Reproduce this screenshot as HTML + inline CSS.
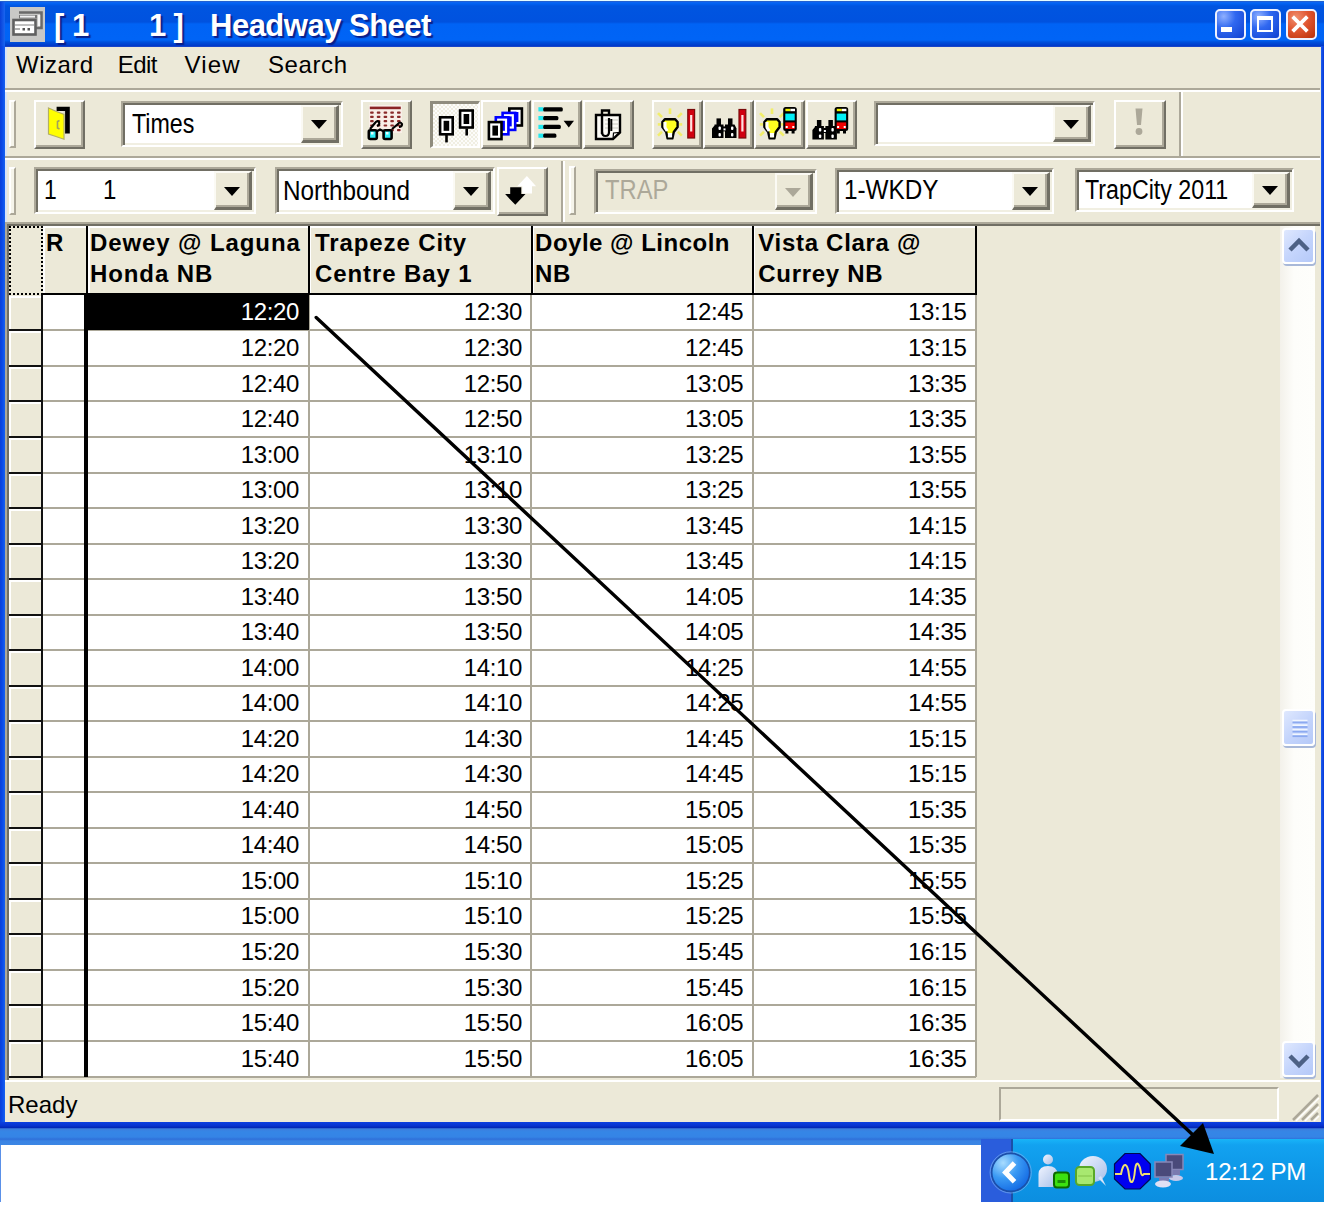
<!DOCTYPE html><html><head><meta charset="utf-8"><style>
*{box-sizing:border-box}
html,body{margin:0;padding:0}
body{width:1324px;height:1209px;overflow:hidden;position:relative;background:#fff;font-family:"Liberation Sans",sans-serif;color:#000}
.a{position:absolute}
.t{position:absolute;white-space:nowrap;font-size:24px;line-height:27px}
.b{font-weight:bold}
.btn{position:absolute;background:#ece9d8;border-top:2px solid #fff;border-left:2px solid #fff;border-right:2px solid #716f64;border-bottom:2px solid #716f64;box-shadow:inset -2px -2px 0 #aca899}
.combo{position:absolute;background:#fff;border-top:2px solid #aca899;border-left:2px solid #aca899;border-right:2px solid #fff;border-bottom:2px solid #fff;box-shadow:inset 2px 2px 0 #716f64, inset -2px -2px 0 #f1efe2}
.dd{position:absolute;top:2px;bottom:2px;right:2px;width:38px;background:#ece9d8;border-top:2px solid #fbfaf4;border-left:2px solid #fbfaf4;border-right:3px solid #716f64;border-bottom:3px solid #716f64;box-shadow:inset -2px -2px 0 #aca899}
.arr{position:absolute;left:50%;top:50%;margin-left:-8.5px;margin-top:-3.5px;width:0;height:0;border-left:8.5px solid transparent;border-right:8.5px solid transparent;border-top:9px solid #000}
.grip{position:absolute;width:7px;border-left:2px solid #fff;border-top:2px solid #fff;border-right:2px solid #aca899;border-bottom:2px solid #aca899;background:#f5f4ea}
.hl{position:absolute;height:2px;background:#aca899}
.wl{position:absolute;height:2px;background:#fff}
.cell{position:absolute;text-align:right;font-size:24px;line-height:27px;white-space:nowrap}
</style></head><body>
<div class="a" style="left:0;top:0;width:1324px;height:47px;background:linear-gradient(to bottom,#e4fcff 0px,#e4fcff 1px,#2a62c8 1px,#1a5ed8 2px,#0a66f2 2.5px,#0060f0 4px,#0055e0 6px,#0052df 22px,#0063f5 24px,#0064f6 40px,#0050dc 42px,#0038c8 46px,#3050c8 47px)"></div>
<div class="a" style="left:0;top:2px;width:5px;height:45px;background:linear-gradient(to right,#0840d8,#1a66f0)"></div>
<div class="a" style="left:10px;top:7px;width:35px;height:35px;background:#c8c8c6"></div>
<svg class="a" style="left:0;top:0" width="50" height="50" viewBox="0 0 50 50"><path d="M19 12.5 L41.5 12.5 L41.5 28 L36 28" fill="none" stroke="#6a6a6a" stroke-width="2.6"/><rect x="38" y="15" width="2.2" height="11" fill="#f4f4f4"/><rect x="19" y="15" width="18" height="3.5" fill="#777"/><rect x="20" y="15.6" width="15" height="2" fill="#f0f0f0"/><rect x="13.5" y="20" width="22" height="14.5" fill="#fff" stroke="#606060" stroke-width="2.6"/><rect x="15" y="24" width="19" height="2" fill="#c0c0c0"/><rect x="15" y="28" width="5" height="2" fill="#b0b0b0"/><rect x="22.5" y="28" width="2.5" height="2.5" fill="#555"/><rect x="27.5" y="28" width="2.5" height="2.5" fill="#555"/></svg>
<div class="t" style="left:54px;top:8px;color:#fff;font-weight:bold;font-size:31px;line-height:35px;text-shadow:2px 2px 1px #0a1f8a">[</div>
<div class="t" style="left:72px;top:8px;color:#fff;font-weight:bold;font-size:31px;line-height:35px;text-shadow:2px 2px 1px #0a1f8a">1</div>
<div class="t" style="left:149px;top:8px;color:#fff;font-weight:bold;font-size:31px;line-height:35px;text-shadow:2px 2px 1px #0a1f8a">1</div>
<div class="t" style="left:173.5px;top:8px;color:#fff;font-weight:bold;font-size:31px;line-height:35px;text-shadow:2px 2px 1px #0a1f8a">]</div>
<div class="t" style="left:210px;top:8px;letter-spacing:-0.5px;color:#fff;font-weight:bold;font-size:31px;line-height:35px;text-shadow:2px 2px 1px #0a1f8a">Headway Sheet</div>
<div class="a" style="left:1215px;top:9px;width:31px;height:31px;border:2px solid #eef2ff;border-radius:5px;background:radial-gradient(circle at 25% 20%,#8fb0ff 0,#3068f0 40%,#1040d0 100%)"></div>
<div class="a" style="left:1250px;top:9px;width:31px;height:31px;border:2px solid #eef2ff;border-radius:5px;background:radial-gradient(circle at 25% 20%,#8fb0ff 0,#3068f0 40%,#1040d0 100%)"></div>
<div class="a" style="left:1286px;top:9px;width:31px;height:31px;border:2px solid #eef2ff;border-radius:5px;background:radial-gradient(circle at 30% 25%,#f09070 0,#e05530 45%,#b83008 100%)"></div>
<div class="a" style="left:1221px;top:27px;width:11px;height:5px;background:#fff"></div>
<div class="a" style="left:1257px;top:16px;width:16px;height:16px;border:2px solid #fff;border-top-width:4px"></div>
<svg class="a" style="left:1286px;top:9px" width="31" height="31" viewBox="0 0 31 31"><path d="M8 9 L20 21 M20 9 L8 21" stroke="#fff" stroke-width="3.8" stroke-linecap="square"/></svg>
<div class="a" style="left:0;top:47px;width:1324px;height:1075px;background:#ece9d8"></div>
<div class="a" style="left:0;top:46px;width:5px;height:1082px;background:linear-gradient(to right,#0a3fd8 0,#0a48e6 40%,#1662f2 100%)"></div>
<div class="a" style="left:5px;top:47px;width:2px;height:176px;background:#d8e4f8"></div>
<div class="a" style="left:1321px;top:46px;width:3px;height:1082px;background:linear-gradient(to right,#1a5ef0,#0838d8)"></div>
<div class="a" style="left:0;top:1122px;width:1324px;height:7px;background:linear-gradient(to bottom,#0c40e0,#0834d0 50%,#0020a8)"></div>
<div class="t" style="left:16.0px;top:51px;letter-spacing:0.50px">Wizard</div>
<div class="t" style="left:117.8px;top:51px;letter-spacing:-0.60px">Edit</div>
<div class="t" style="left:184.5px;top:51px;letter-spacing:1.20px">View</div>
<div class="t" style="left:268.0px;top:51px;letter-spacing:0.60px">Search</div>
<div class="hl" style="left:5px;top:88px;width:1315px"></div>
<div class="wl" style="left:5px;top:90px;width:1315px"></div>
<div class="grip" style="left:9px;top:100px;height:48px"></div>
<div class="btn" style="left:34px;top:100px;width:51px;height:49px"></div>
<div class="combo" style="left:121px;top:101px;width:222px;height:46px"><div class="dd"><div class="arr"></div></div></div>
<div class="btn" style="left:361px;top:100px;width:51px;height:49px"></div>
<div class="a" style="left:430px;top:101px;width:50px;height:47px;border-top:3px solid #8f8c7e;border-left:3px solid #8f8c7e;border-right:2px solid #fff;border-bottom:2px solid #fff;background-color:#f4f3ee;background-image:repeating-conic-gradient(#f0eee2 0 25%,#fcfcfa 0 50%);background-size:4px 4px"></div>
<div class="btn" style="left:481px;top:100px;width:50px;height:49px"></div>
<div class="btn" style="left:532px;top:100px;width:50px;height:49px"></div>
<div class="btn" style="left:583px;top:100px;width:51px;height:49px"></div>
<div class="btn" style="left:652px;top:100px;width:51px;height:49px"></div>
<div class="btn" style="left:703px;top:100px;width:51px;height:49px"></div>
<div class="btn" style="left:754px;top:100px;width:51px;height:49px"></div>
<div class="btn" style="left:806px;top:100px;width:51px;height:49px"></div>
<svg class="a" style="left:0;top:0" width="1324" height="230" viewBox="0 0 1324 230"><path d="M56.6 106.8 L69.8 106.8 L69.8 133.4 L65 133.4 L65 111 L56.6 111 Z" fill="#000"/><rect x="63.5" y="111" width="1.6" height="22" fill="#d8d8c8"/><path d="M48.5 108 L56.5 111.5 L64 114.5 L64 139.2 L56 136.5 L48.5 134 Z" fill="#ffff00" stroke="#b4b060" stroke-width="1.2"/><path d="M59.5 120.5 L57.5 121.5 L57.5 128 L59.5 129" stroke="#a0a060" stroke-width="1.6" fill="none"/><rect x="369" y="105" width="33" height="28" fill="#fff0f0" opacity="0.7"/><rect x="369.8" y="106.6" width="31" height="2.6" fill="#8b2424"/><g fill="#8b2a2a"><rect x="370.1" y="111.5" width="3.6" height="2.2" rx="0.8"/><rect x="370.1" y="115.8" width="3.6" height="2.2" rx="0.8"/><rect x="370.1" y="120.1" width="3.6" height="2.2" rx="0.8"/><rect x="370.1" y="124.4" width="3.6" height="2.2" rx="0.8"/><rect x="376.8" y="111.5" width="3.6" height="2.2" rx="0.8"/><rect x="376.8" y="115.8" width="3.6" height="2.2" rx="0.8"/><rect x="376.8" y="120.1" width="3.6" height="2.2" rx="0.8"/><rect x="376.8" y="124.4" width="3.6" height="2.2" rx="0.8"/><rect x="383.6" y="111.5" width="3.6" height="2.2" rx="0.8"/><rect x="383.6" y="115.8" width="3.6" height="2.2" rx="0.8"/><rect x="383.6" y="120.1" width="3.6" height="2.2" rx="0.8"/><rect x="383.6" y="124.4" width="3.6" height="2.2" rx="0.8"/><rect x="390.3" y="111.5" width="3.6" height="2.2" rx="0.8"/><rect x="390.3" y="115.8" width="3.6" height="2.2" rx="0.8"/><rect x="390.3" y="120.1" width="3.6" height="2.2" rx="0.8"/><rect x="390.3" y="124.4" width="3.6" height="2.2" rx="0.8"/><rect x="390.3" y="129.0" width="3.6" height="2.2" rx="0.8"/><rect x="397.0" y="111.5" width="3.6" height="2.2" rx="0.8"/><rect x="397.0" y="115.8" width="3.6" height="2.2" rx="0.8"/><rect x="397.0" y="120.1" width="3.6" height="2.2" rx="0.8"/><rect x="397.0" y="124.4" width="3.6" height="2.2" rx="0.8"/><rect x="397.0" y="129.0" width="3.6" height="2.2" rx="0.8"/></g><path d="M370 129 L375 123 Q377 120 379 122 Q380 125 377 126" stroke="#000" stroke-width="2.2" fill="none"/><path d="M392 129 L398 124 Q400 121 402 124 Q402 127 399 127" stroke="#000" stroke-width="2.2" fill="none"/><rect x="368.8" y="130.2" width="8" height="8.8" rx="1.5" fill="#30f0f8" stroke="#000" stroke-width="2.6"/><rect x="383.6" y="130.2" width="8" height="8.8" rx="1.5" fill="#30f0f8" stroke="#000" stroke-width="2.6"/><rect x="371" y="132" width="2.5" height="2.5" fill="#e8ffff"/><rect x="386" y="132" width="2.5" height="2.5" fill="#e8ffff"/><path d="M376.5 131.5 L380 129.5 L384 131.5" stroke="#000" stroke-width="2.4" fill="none"/><rect x="438.8" y="116.0" width="15.2" height="19.6" fill="#000"/><rect x="441.4" y="118.6" width="10.0" height="14.4" fill="#fff"/><rect x="443.6" y="120.8" width="5.6" height="10.0" fill="#000"/><rect x="445.2" y="135" width="2.6" height="7.4" fill="#000"/><rect x="458.8" y="109.2" width="15.2" height="19.6" fill="#000"/><rect x="461.4" y="111.8" width="10.0" height="14.4" fill="#fff"/><rect x="463.6" y="114.0" width="5.6" height="10.0" fill="#000"/><rect x="465.4" y="128.5" width="2.6" height="7" fill="#000"/><rect x="508.0" y="107.2" width="15.2" height="19.6" fill="#000"/><rect x="510.6" y="109.8" width="10.0" height="14.4" fill="#fff"/><rect x="512.8" y="112.0" width="5.6" height="10.0" fill="#0000ff"/><rect x="501.3" y="111.6" width="15.2" height="19.6" fill="#0000ff"/><rect x="503.9" y="114.2" width="10.0" height="14.4" fill="#fff"/><rect x="506.1" y="116.4" width="5.6" height="10.0" fill="#0000ff"/><rect x="494.5" y="116.0" width="15.2" height="19.6" fill="#0000ff"/><rect x="497.1" y="118.6" width="10.0" height="14.4" fill="#fff"/><rect x="499.3" y="120.8" width="5.6" height="10.0" fill="#0000ff"/><rect x="487.6" y="120.8" width="15.2" height="19.6" fill="#000"/><rect x="490.2" y="123.4" width="10.0" height="14.4" fill="#fff"/><rect x="492.4" y="125.6" width="5.6" height="10.0" fill="#000"/><g fill="#000"><rect x="543" y="107.2" width="19.8" height="4.2" rx="1.5"/><rect x="543" y="116" width="15.4" height="4.2" rx="1.5"/><rect x="543" y="124.8" width="17.8" height="4.2" rx="1.5"/><rect x="543" y="133.6" width="13.4" height="4.2" rx="1.5"/></g><g fill="#20e8f0"><rect x="538.4" y="107.2" width="4.8" height="4.2"/><rect x="538.4" y="116" width="4.8" height="4.2"/><rect x="538.4" y="124.8" width="4.8" height="4.2"/><rect x="538.4" y="133.6" width="4.8" height="4.2"/></g><path d="M563.6 120.8 L574 120.8 L568.8 127.4 Z" fill="#000"/><path d="M596 115 L620 115 L620 132.4 L613 139 L596 139 Z" fill="#fbfaf5" stroke="#000" stroke-width="2.4" stroke-linejoin="miter"/><path d="M613 139 L613.5 133 L620 132.4" fill="none" stroke="#000" stroke-width="1.2"/><g stroke="#c8c8c0" stroke-width="1"><line x1="605" y1="120" x2="618" y2="120"/><line x1="605" y1="124" x2="618" y2="124"/><line x1="605" y1="128" x2="618" y2="128"/></g><path d="M602 134 L602 110.5 L609 110.5 L609 114" stroke="#000" stroke-width="2.4" fill="none"/><path d="M602 132 Q602 136 605.5 136 Q609 136 609 132 L609 118" stroke="#000" stroke-width="2.2" fill="none"/><line x1="611.3" y1="119" x2="611.3" y2="131" stroke="#000" stroke-width="2"/><g stroke="#f2ee6a" stroke-width="2.6" stroke-linecap="butt"><line x1="670.0" y1="108.4" x2="670.0" y2="114.0"/><line x1="658.0" y1="113.2" x2="662.0" y2="117.2"/><line x1="681.8" y1="113.2" x2="677.8" y2="117.2"/><line x1="657.8" y1="124.4" x2="661.0" y2="124.4"/><line x1="679.0" y1="124.4" x2="682.2" y2="124.4"/><line x1="658.0" y1="135.6" x2="662.0" y2="131.8"/><line x1="681.8" y1="135.6" x2="677.8" y2="131.8"/></g><path d="M664.8 119.2 L675.2 119.2 L677.6 122.0 L677.6 127.0 L673.8 132.0 L672.4 138.4 L667.6 138.4 L666.2 132.0 L662.4 127.0 L662.4 122.0 Z" fill="#ffff20" stroke="#000" stroke-width="2.4" stroke-linejoin="round"/><path d="M665.0 122 L665.0 127.5 L667.2 131" stroke="#fff" stroke-width="3" fill="none"/><rect x="667.9" y="133" width="4.2" height="4.4" fill="#fff"/><rect x="687.8" y="109.5" width="6.8" height="28.5" fill="#d00010" stroke="#7a0a0a" stroke-width="1.2"/><rect x="690.1" y="115" width="2.2" height="16.5" fill="#ffe0e0"/><g fill="#000"><rect x="716.5" y="118.4" width="4.5" height="9"/><rect x="728.0" y="118.4" width="4.5" height="9"/><path d="M714.5 124.4 L723.5 124.4 L723.5 138.0 L712.0 138.0 L712.0 128.4 L714.5 125.4 Z"/><path d="M725.0 124.4 L734.5 124.4 L736.5 128.4 L736.5 138.0 L725.0 138.0 Z"/><rect x="723.0" y="126.4" width="3" height="5"/></g><g fill="#fff"><rect x="718.5" y="126.4" width="2.4" height="3.6" rx="1"/><rect x="718.5" y="132.9" width="2.4" height="3.6" rx="1"/><rect x="731.0" y="126.4" width="2.4" height="3.6" rx="1"/><rect x="731.0" y="132.9" width="2.4" height="3.6" rx="1"/><rect x="723.5" y="128.4" width="2" height="2"/></g><rect x="739.0" y="109.5" width="6.8" height="28.5" fill="#d00010" stroke="#7a0a0a" stroke-width="1.2"/><rect x="741.3" y="115" width="2.2" height="16.5" fill="#ffe0e0"/><g stroke="#f2ee6a" stroke-width="2.6" stroke-linecap="butt"><line x1="772.0" y1="108.4" x2="772.0" y2="114.0"/><line x1="760.0" y1="113.2" x2="764.0" y2="117.2"/><line x1="783.8" y1="113.2" x2="779.8" y2="117.2"/><line x1="759.8" y1="124.4" x2="763.0" y2="124.4"/><line x1="781.0" y1="124.4" x2="784.2" y2="124.4"/><line x1="760.0" y1="135.6" x2="764.0" y2="131.8"/><line x1="783.8" y1="135.6" x2="779.8" y2="131.8"/></g><path d="M766.8 119.2 L777.2 119.2 L779.6 122.0 L779.6 127.0 L775.8 132.0 L774.4 138.4 L769.6 138.4 L768.2 132.0 L764.4 127.0 L764.4 122.0 Z" fill="#ffff20" stroke="#000" stroke-width="2.4" stroke-linejoin="round"/><path d="M767.0 122 L767.0 127.5 L769.2 131" stroke="#fff" stroke-width="3" fill="none"/><rect x="769.9" y="133" width="4.2" height="4.4" fill="#fff"/><rect x="783.2" y="107" width="13.6" height="24" rx="2.5" fill="#000"/><rect x="785.4" y="108.8" width="5" height="2.4" fill="#f0f000"/><rect x="790.4" y="108.8" width="4.6" height="2.4" fill="#fff"/><rect x="785.3" y="113.6" width="9.4" height="6.8" fill="#00f0f8"/><rect x="785.3" y="122.4" width="9.4" height="6.6" fill="#f00000"/><rect x="785.7" y="126" width="2" height="2" fill="#fff"/><rect x="792.3" y="126" width="2" height="2" fill="#fff"/><rect x="785.4" y="130" width="3" height="3.5" fill="#000"/><rect x="791.6" y="130" width="3" height="3.5" fill="#000"/><g fill="#000"><rect x="816.9" y="120.0" width="4.5" height="9"/><rect x="828.4" y="120.0" width="4.5" height="9"/><path d="M814.9 126.0 L823.9 126.0 L823.9 139.6 L812.4 139.6 L812.4 130.0 L814.9 127.0 Z"/><path d="M825.4 126.0 L834.9 126.0 L836.9 130.0 L836.9 139.6 L825.4 139.6 Z"/><rect x="823.4" y="128.0" width="3" height="5"/></g><g fill="#fff"><rect x="818.9" y="128.0" width="2.4" height="3.6" rx="1"/><rect x="818.9" y="134.5" width="2.4" height="3.6" rx="1"/><rect x="831.4" y="128.0" width="2.4" height="3.6" rx="1"/><rect x="831.4" y="134.5" width="2.4" height="3.6" rx="1"/><rect x="823.9" y="130.0" width="2" height="2"/></g><rect x="834.6" y="107" width="13.6" height="24" rx="2.5" fill="#000"/><rect x="836.8" y="108.8" width="5" height="2.4" fill="#f0f000"/><rect x="841.8" y="108.8" width="4.6" height="2.4" fill="#fff"/><rect x="836.7" y="113.6" width="9.4" height="6.8" fill="#00f0f8"/><rect x="836.7" y="122.4" width="9.4" height="6.6" fill="#f00000"/><rect x="837.1" y="126" width="2" height="2" fill="#fff"/><rect x="843.7" y="126" width="2" height="2" fill="#fff"/><rect x="836.8" y="130" width="3" height="3.5" fill="#000"/><rect x="843.0" y="130" width="3" height="3.5" fill="#000"/></svg>
<div class="combo" style="left:874px;top:101px;width:221px;height:45px"><div class="dd"><div class="arr"></div></div></div>
<div class="btn" style="left:1114px;top:100px;width:52px;height:49px"></div>
<svg class="a" style="left:1114px;top:100px" width="52" height="49" viewBox="0 0 52 49"><path d="M21.5 8.5 L28.5 8.5 L27 25 L23 25 Z" fill="#aca899"/><circle cx="25" cy="31.5" r="3.4" fill="#aca899"/></svg>
<div class="a" style="left:1179px;top:92px;width:2px;height:65px;background:#aca899"></div>
<div class="a" style="left:1181px;top:92px;width:2px;height:65px;background:#fff"></div>
<div class="hl" style="left:5px;top:156px;width:1315px"></div>
<div class="wl" style="left:5px;top:158px;width:1315px"></div>
<div class="grip" style="left:9px;top:167px;height:48px"></div>
<div class="combo" style="left:34px;top:167px;width:222px;height:47px"><div class="dd"><div class="arr"></div></div></div>
<div class="combo" style="left:275px;top:167px;width:220px;height:47px"><div class="dd"><div class="arr"></div></div></div>
<div class="btn" style="left:497px;top:167px;width:51px;height:49px"></div>
<svg class="a" style="left:0;top:0" width="1324" height="230" viewBox="0 0 1324 230"><path d="M526.9 176 L536.1 186.2 L532 186.2 L532 193.6 L522.3 193.6 L522.3 186.2 L517.2 186.2 Z" fill="#fff"/><path d="M510.2 187.2 L521.3 187.2 L521.3 194.1 L525.5 194.1 L515.3 204.8 L505.1 194.1 L510.2 194.1 Z" fill="#000"/></svg>
<div class="a" style="left:561px;top:161px;width:2px;height:61px;background:#aca899"></div>
<div class="a" style="left:563px;top:161px;width:2px;height:61px;background:#fff"></div>
<div class="grip" style="left:569px;top:166px;height:49px"></div>
<div class="combo" style="left:594px;top:169px;width:223px;height:45px;background:#ece9d8"><div class="dd"><div class="arr" style="border-top-color:#aca899"></div></div></div>
<div class="combo" style="left:835px;top:168px;width:219px;height:46px"><div class="dd"><div class="arr"></div></div></div>
<div class="combo" style="left:1075px;top:168px;width:219px;height:44px"><div class="dd"><div class="arr"></div></div></div>
<div class="a" style="left:131.50px;top:109.91px;font-size:28.0px;line-height:28.0px;white-space:nowrap;transform:scaleX(0.8300);transform-origin:0 0;">Times</div>
<div class="a" style="left:43.50px;top:177.33px;font-size:27.0px;line-height:27.0px;white-space:nowrap;transform:scaleX(0.8500);transform-origin:0 0;">1</div>
<div class="a" style="left:103.00px;top:177.33px;font-size:27.0px;line-height:27.0px;white-space:nowrap;transform:scaleX(0.8900);transform-origin:0 0;">1</div>
<div class="a" style="left:283.00px;top:177.63px;font-size:27.0px;line-height:27.0px;white-space:nowrap;transform:scaleX(0.9000);transform-origin:0 0;">Northbound</div>
<div class="a" style="left:605.00px;top:177.03px;font-size:27.0px;line-height:27.0px;white-space:nowrap;transform:scaleX(0.8800);transform-origin:0 0;color:#aca899">TRAP</div>
<div class="a" style="left:843.50px;top:177.03px;font-size:27.0px;line-height:27.0px;white-space:nowrap;transform:scaleX(0.9000);transform-origin:0 0;">1-WKDY</div>
<div class="a" style="left:1084.50px;top:177.43px;font-size:27.0px;line-height:27.0px;white-space:nowrap;transform:scaleX(0.8600);transform-origin:0 0;">TrapCity 2011</div>
<div class="a" style="left:5px;top:222px;width:1315px;height:2px;background:#aca899"></div>
<div class="a" style="left:5px;top:224px;width:1315px;height:2px;background:#716f64"></div>
<div class="a" style="left:5px;top:222px;width:2px;height:860px;background:#aca899"></div>
<div class="a" style="left:7px;top:224px;width:2px;height:857px;background:#716f64"></div>
<div class="a" style="left:5px;top:1080px;width:1315px;height:2px;background:#fff"></div>
<div class="a" style="left:9px;top:226px;width:34px;height:69px;background:#ece9d8;border:2.5px dotted #000"></div>
<div class="a" style="left:43px;top:226px;width:44px;height:68px;background:#ece9d8;border-top:2px solid #fff;border-left:2px solid #fff"></div>
<div class="t b" style="left:46px;top:229px">R</div>
<div class="a" style="left:88.0px;top:226px;width:221.1px;height:68px;background:#ece9d8;border-top:2px solid #fff;border-left:2px solid #fff"></div>
<div class="t b" style="left:90.0px;top:227px;letter-spacing:0.90px;line-height:31px">Dewey @ Laguna<br>Honda NB</div>
<div class="a" style="left:309.1px;top:226px;width:223.0px;height:68px;background:#ece9d8;border-top:2px solid #fff;border-left:2px solid #fff"></div>
<div class="t b" style="left:315.1px;top:227px;letter-spacing:0.88px;line-height:31px">Trapeze City<br>Centre Bay 1</div>
<div class="a" style="left:532.1px;top:226px;width:221.2px;height:68px;background:#ece9d8;border-top:2px solid #fff;border-left:2px solid #fff"></div>
<div class="t b" style="left:535.1px;top:227px;letter-spacing:0.50px;line-height:31px">Doyle @ Lincoln<br>NB</div>
<div class="a" style="left:753.3px;top:226px;width:223.1px;height:68px;background:#ece9d8;border-top:2px solid #fff;border-left:2px solid #fff"></div>
<div class="t b" style="left:758.3px;top:227px;letter-spacing:0.70px;line-height:31px">Vista Clara @<br>Currey NB</div>
<div class="a" style="left:86px;top:226px;width:2px;height:69px;background:#000"></div>
<div class="a" style="left:308px;top:226px;width:2px;height:69px;background:#000"></div>
<div class="a" style="left:531px;top:226px;width:2px;height:69px;background:#000"></div>
<div class="a" style="left:752px;top:226px;width:2px;height:69px;background:#000"></div>
<div class="a" style="left:975px;top:226px;width:2px;height:69px;background:#000"></div>
<div class="a" style="left:43px;top:293px;width:934px;height:2.5px;background:#000"></div>
<div class="a" style="left:43px;top:295px;width:933px;height:781.7px;background:#fff"></div>
<div class="a" style="left:9px;top:296px;width:32px;height:33px;background:#ece9d8;border-top:2px solid #fff;border-left:2px solid #fff"></div>
<div class="a" style="left:9px;top:329px;width:34px;height:2px;background:#111"></div>
<div class="a" style="left:43px;top:329px;width:933px;height:2px;background:#aca899"></div>
<div class="a" style="left:9px;top:331px;width:32px;height:34px;background:#ece9d8;border-top:2px solid #fff;border-left:2px solid #fff"></div>
<div class="a" style="left:9px;top:365px;width:34px;height:2px;background:#111"></div>
<div class="a" style="left:43px;top:365px;width:933px;height:2px;background:#aca899"></div>
<div class="a" style="left:9px;top:367px;width:32px;height:33px;background:#ece9d8;border-top:2px solid #fff;border-left:2px solid #fff"></div>
<div class="a" style="left:9px;top:400px;width:34px;height:2px;background:#111"></div>
<div class="a" style="left:43px;top:400px;width:933px;height:2px;background:#aca899"></div>
<div class="a" style="left:9px;top:402px;width:32px;height:34px;background:#ece9d8;border-top:2px solid #fff;border-left:2px solid #fff"></div>
<div class="a" style="left:9px;top:436px;width:34px;height:2px;background:#111"></div>
<div class="a" style="left:43px;top:436px;width:933px;height:2px;background:#aca899"></div>
<div class="a" style="left:9px;top:438px;width:32px;height:34px;background:#ece9d8;border-top:2px solid #fff;border-left:2px solid #fff"></div>
<div class="a" style="left:9px;top:472px;width:34px;height:2px;background:#111"></div>
<div class="a" style="left:43px;top:472px;width:933px;height:2px;background:#aca899"></div>
<div class="a" style="left:9px;top:474px;width:32px;height:33px;background:#ece9d8;border-top:2px solid #fff;border-left:2px solid #fff"></div>
<div class="a" style="left:9px;top:507px;width:34px;height:2px;background:#111"></div>
<div class="a" style="left:43px;top:507px;width:933px;height:2px;background:#aca899"></div>
<div class="a" style="left:9px;top:509px;width:32px;height:34px;background:#ece9d8;border-top:2px solid #fff;border-left:2px solid #fff"></div>
<div class="a" style="left:9px;top:543px;width:34px;height:2px;background:#111"></div>
<div class="a" style="left:43px;top:543px;width:933px;height:2px;background:#aca899"></div>
<div class="a" style="left:9px;top:545px;width:32px;height:33px;background:#ece9d8;border-top:2px solid #fff;border-left:2px solid #fff"></div>
<div class="a" style="left:9px;top:578px;width:34px;height:2px;background:#111"></div>
<div class="a" style="left:43px;top:578px;width:933px;height:2px;background:#aca899"></div>
<div class="a" style="left:9px;top:580px;width:32px;height:34px;background:#ece9d8;border-top:2px solid #fff;border-left:2px solid #fff"></div>
<div class="a" style="left:9px;top:614px;width:34px;height:2px;background:#111"></div>
<div class="a" style="left:43px;top:614px;width:933px;height:2px;background:#aca899"></div>
<div class="a" style="left:9px;top:616px;width:32px;height:33px;background:#ece9d8;border-top:2px solid #fff;border-left:2px solid #fff"></div>
<div class="a" style="left:9px;top:649px;width:34px;height:2px;background:#111"></div>
<div class="a" style="left:43px;top:649px;width:933px;height:2px;background:#aca899"></div>
<div class="a" style="left:9px;top:651px;width:32px;height:34px;background:#ece9d8;border-top:2px solid #fff;border-left:2px solid #fff"></div>
<div class="a" style="left:9px;top:685px;width:34px;height:2px;background:#111"></div>
<div class="a" style="left:43px;top:685px;width:933px;height:2px;background:#aca899"></div>
<div class="a" style="left:9px;top:687px;width:32px;height:33px;background:#ece9d8;border-top:2px solid #fff;border-left:2px solid #fff"></div>
<div class="a" style="left:9px;top:720px;width:34px;height:2px;background:#111"></div>
<div class="a" style="left:43px;top:720px;width:933px;height:2px;background:#aca899"></div>
<div class="a" style="left:9px;top:722px;width:32px;height:34px;background:#ece9d8;border-top:2px solid #fff;border-left:2px solid #fff"></div>
<div class="a" style="left:9px;top:756px;width:34px;height:2px;background:#111"></div>
<div class="a" style="left:43px;top:756px;width:933px;height:2px;background:#aca899"></div>
<div class="a" style="left:9px;top:758px;width:32px;height:33px;background:#ece9d8;border-top:2px solid #fff;border-left:2px solid #fff"></div>
<div class="a" style="left:9px;top:791px;width:34px;height:2px;background:#111"></div>
<div class="a" style="left:43px;top:791px;width:933px;height:2px;background:#aca899"></div>
<div class="a" style="left:9px;top:793px;width:32px;height:34px;background:#ece9d8;border-top:2px solid #fff;border-left:2px solid #fff"></div>
<div class="a" style="left:9px;top:827px;width:34px;height:2px;background:#111"></div>
<div class="a" style="left:43px;top:827px;width:933px;height:2px;background:#aca899"></div>
<div class="a" style="left:9px;top:829px;width:32px;height:33px;background:#ece9d8;border-top:2px solid #fff;border-left:2px solid #fff"></div>
<div class="a" style="left:9px;top:862px;width:34px;height:2px;background:#111"></div>
<div class="a" style="left:43px;top:862px;width:933px;height:2px;background:#aca899"></div>
<div class="a" style="left:9px;top:864px;width:32px;height:34px;background:#ece9d8;border-top:2px solid #fff;border-left:2px solid #fff"></div>
<div class="a" style="left:9px;top:898px;width:34px;height:2px;background:#111"></div>
<div class="a" style="left:43px;top:898px;width:933px;height:2px;background:#aca899"></div>
<div class="a" style="left:9px;top:900px;width:32px;height:33px;background:#ece9d8;border-top:2px solid #fff;border-left:2px solid #fff"></div>
<div class="a" style="left:9px;top:933px;width:34px;height:2px;background:#111"></div>
<div class="a" style="left:43px;top:933px;width:933px;height:2px;background:#aca899"></div>
<div class="a" style="left:9px;top:935px;width:32px;height:34px;background:#ece9d8;border-top:2px solid #fff;border-left:2px solid #fff"></div>
<div class="a" style="left:9px;top:969px;width:34px;height:2px;background:#111"></div>
<div class="a" style="left:43px;top:969px;width:933px;height:2px;background:#aca899"></div>
<div class="a" style="left:9px;top:971px;width:32px;height:33px;background:#ece9d8;border-top:2px solid #fff;border-left:2px solid #fff"></div>
<div class="a" style="left:9px;top:1004px;width:34px;height:2px;background:#111"></div>
<div class="a" style="left:43px;top:1004px;width:933px;height:2px;background:#aca899"></div>
<div class="a" style="left:9px;top:1006px;width:32px;height:34px;background:#ece9d8;border-top:2px solid #fff;border-left:2px solid #fff"></div>
<div class="a" style="left:9px;top:1040px;width:34px;height:2px;background:#111"></div>
<div class="a" style="left:43px;top:1040px;width:933px;height:2px;background:#aca899"></div>
<div class="a" style="left:9px;top:1042px;width:32px;height:34px;background:#ece9d8;border-top:2px solid #fff;border-left:2px solid #fff"></div>
<div class="a" style="left:9px;top:1076px;width:34px;height:2px;background:#111"></div>
<div class="a" style="left:43px;top:1076px;width:933px;height:2px;background:#aca899"></div>
<div class="a" style="left:40.5px;top:295px;width:2.5px;height:781.7px;background:#111"></div>
<div class="a" style="left:308px;top:295px;width:2px;height:781.7px;background:#aca899"></div>
<div class="a" style="left:530px;top:295px;width:2px;height:781.7px;background:#aca899"></div>
<div class="a" style="left:752px;top:295px;width:2px;height:781.7px;background:#aca899"></div>
<div class="a" style="left:975px;top:295px;width:2px;height:781.7px;background:#aca899"></div>
<div class="a" style="left:87px;top:295px;width:222px;height:35px;background:#000"></div>
<div class="a" style="left:83.5px;top:295px;width:4px;height:781.7px;background:#000"></div>
<div class="cell" style="left:87.5px;width:211.6px;top:298.4px;color:#fff;letter-spacing:-0.35px">12:20</div>
<div class="cell" style="left:308.6px;width:213.5px;top:298.4px;color:#000;letter-spacing:-0.35px">12:30</div>
<div class="cell" style="left:531.6px;width:211.7px;top:298.4px;color:#000;letter-spacing:-0.35px">12:45</div>
<div class="cell" style="left:752.8px;width:213.6px;top:298.4px;color:#000;letter-spacing:-0.35px">13:15</div>
<div class="cell" style="left:87.5px;width:211.6px;top:333.9px;color:#000;letter-spacing:-0.35px">12:20</div>
<div class="cell" style="left:308.6px;width:213.5px;top:333.9px;color:#000;letter-spacing:-0.35px">12:30</div>
<div class="cell" style="left:531.6px;width:211.7px;top:333.9px;color:#000;letter-spacing:-0.35px">12:45</div>
<div class="cell" style="left:752.8px;width:213.6px;top:333.9px;color:#000;letter-spacing:-0.35px">13:15</div>
<div class="cell" style="left:87.5px;width:211.6px;top:369.5px;color:#000;letter-spacing:-0.35px">12:40</div>
<div class="cell" style="left:308.6px;width:213.5px;top:369.5px;color:#000;letter-spacing:-0.35px">12:50</div>
<div class="cell" style="left:531.6px;width:211.7px;top:369.5px;color:#000;letter-spacing:-0.35px">13:05</div>
<div class="cell" style="left:752.8px;width:213.6px;top:369.5px;color:#000;letter-spacing:-0.35px">13:35</div>
<div class="cell" style="left:87.5px;width:211.6px;top:405.0px;color:#000;letter-spacing:-0.35px">12:40</div>
<div class="cell" style="left:308.6px;width:213.5px;top:405.0px;color:#000;letter-spacing:-0.35px">12:50</div>
<div class="cell" style="left:531.6px;width:211.7px;top:405.0px;color:#000;letter-spacing:-0.35px">13:05</div>
<div class="cell" style="left:752.8px;width:213.6px;top:405.0px;color:#000;letter-spacing:-0.35px">13:35</div>
<div class="cell" style="left:87.5px;width:211.6px;top:440.5px;color:#000;letter-spacing:-0.35px">13:00</div>
<div class="cell" style="left:308.6px;width:213.5px;top:440.5px;color:#000;letter-spacing:-0.35px">13:10</div>
<div class="cell" style="left:531.6px;width:211.7px;top:440.5px;color:#000;letter-spacing:-0.35px">13:25</div>
<div class="cell" style="left:752.8px;width:213.6px;top:440.5px;color:#000;letter-spacing:-0.35px">13:55</div>
<div class="cell" style="left:87.5px;width:211.6px;top:476.0px;color:#000;letter-spacing:-0.35px">13:00</div>
<div class="cell" style="left:308.6px;width:213.5px;top:476.0px;color:#000;letter-spacing:-0.35px">13:10</div>
<div class="cell" style="left:531.6px;width:211.7px;top:476.0px;color:#000;letter-spacing:-0.35px">13:25</div>
<div class="cell" style="left:752.8px;width:213.6px;top:476.0px;color:#000;letter-spacing:-0.35px">13:55</div>
<div class="cell" style="left:87.5px;width:211.6px;top:511.6px;color:#000;letter-spacing:-0.35px">13:20</div>
<div class="cell" style="left:308.6px;width:213.5px;top:511.6px;color:#000;letter-spacing:-0.35px">13:30</div>
<div class="cell" style="left:531.6px;width:211.7px;top:511.6px;color:#000;letter-spacing:-0.35px">13:45</div>
<div class="cell" style="left:752.8px;width:213.6px;top:511.6px;color:#000;letter-spacing:-0.35px">14:15</div>
<div class="cell" style="left:87.5px;width:211.6px;top:547.1px;color:#000;letter-spacing:-0.35px">13:20</div>
<div class="cell" style="left:308.6px;width:213.5px;top:547.1px;color:#000;letter-spacing:-0.35px">13:30</div>
<div class="cell" style="left:531.6px;width:211.7px;top:547.1px;color:#000;letter-spacing:-0.35px">13:45</div>
<div class="cell" style="left:752.8px;width:213.6px;top:547.1px;color:#000;letter-spacing:-0.35px">14:15</div>
<div class="cell" style="left:87.5px;width:211.6px;top:582.6px;color:#000;letter-spacing:-0.35px">13:40</div>
<div class="cell" style="left:308.6px;width:213.5px;top:582.6px;color:#000;letter-spacing:-0.35px">13:50</div>
<div class="cell" style="left:531.6px;width:211.7px;top:582.6px;color:#000;letter-spacing:-0.35px">14:05</div>
<div class="cell" style="left:752.8px;width:213.6px;top:582.6px;color:#000;letter-spacing:-0.35px">14:35</div>
<div class="cell" style="left:87.5px;width:211.6px;top:618.2px;color:#000;letter-spacing:-0.35px">13:40</div>
<div class="cell" style="left:308.6px;width:213.5px;top:618.2px;color:#000;letter-spacing:-0.35px">13:50</div>
<div class="cell" style="left:531.6px;width:211.7px;top:618.2px;color:#000;letter-spacing:-0.35px">14:05</div>
<div class="cell" style="left:752.8px;width:213.6px;top:618.2px;color:#000;letter-spacing:-0.35px">14:35</div>
<div class="cell" style="left:87.5px;width:211.6px;top:653.7px;color:#000;letter-spacing:-0.35px">14:00</div>
<div class="cell" style="left:308.6px;width:213.5px;top:653.7px;color:#000;letter-spacing:-0.35px">14:10</div>
<div class="cell" style="left:531.6px;width:211.7px;top:653.7px;color:#000;letter-spacing:-0.35px">14:25</div>
<div class="cell" style="left:752.8px;width:213.6px;top:653.7px;color:#000;letter-spacing:-0.35px">14:55</div>
<div class="cell" style="left:87.5px;width:211.6px;top:689.2px;color:#000;letter-spacing:-0.35px">14:00</div>
<div class="cell" style="left:308.6px;width:213.5px;top:689.2px;color:#000;letter-spacing:-0.35px">14:10</div>
<div class="cell" style="left:531.6px;width:211.7px;top:689.2px;color:#000;letter-spacing:-0.35px">14:25</div>
<div class="cell" style="left:752.8px;width:213.6px;top:689.2px;color:#000;letter-spacing:-0.35px">14:55</div>
<div class="cell" style="left:87.5px;width:211.6px;top:724.8px;color:#000;letter-spacing:-0.35px">14:20</div>
<div class="cell" style="left:308.6px;width:213.5px;top:724.8px;color:#000;letter-spacing:-0.35px">14:30</div>
<div class="cell" style="left:531.6px;width:211.7px;top:724.8px;color:#000;letter-spacing:-0.35px">14:45</div>
<div class="cell" style="left:752.8px;width:213.6px;top:724.8px;color:#000;letter-spacing:-0.35px">15:15</div>
<div class="cell" style="left:87.5px;width:211.6px;top:760.3px;color:#000;letter-spacing:-0.35px">14:20</div>
<div class="cell" style="left:308.6px;width:213.5px;top:760.3px;color:#000;letter-spacing:-0.35px">14:30</div>
<div class="cell" style="left:531.6px;width:211.7px;top:760.3px;color:#000;letter-spacing:-0.35px">14:45</div>
<div class="cell" style="left:752.8px;width:213.6px;top:760.3px;color:#000;letter-spacing:-0.35px">15:15</div>
<div class="cell" style="left:87.5px;width:211.6px;top:795.8px;color:#000;letter-spacing:-0.35px">14:40</div>
<div class="cell" style="left:308.6px;width:213.5px;top:795.8px;color:#000;letter-spacing:-0.35px">14:50</div>
<div class="cell" style="left:531.6px;width:211.7px;top:795.8px;color:#000;letter-spacing:-0.35px">15:05</div>
<div class="cell" style="left:752.8px;width:213.6px;top:795.8px;color:#000;letter-spacing:-0.35px">15:35</div>
<div class="cell" style="left:87.5px;width:211.6px;top:831.4px;color:#000;letter-spacing:-0.35px">14:40</div>
<div class="cell" style="left:308.6px;width:213.5px;top:831.4px;color:#000;letter-spacing:-0.35px">14:50</div>
<div class="cell" style="left:531.6px;width:211.7px;top:831.4px;color:#000;letter-spacing:-0.35px">15:05</div>
<div class="cell" style="left:752.8px;width:213.6px;top:831.4px;color:#000;letter-spacing:-0.35px">15:35</div>
<div class="cell" style="left:87.5px;width:211.6px;top:866.9px;color:#000;letter-spacing:-0.35px">15:00</div>
<div class="cell" style="left:308.6px;width:213.5px;top:866.9px;color:#000;letter-spacing:-0.35px">15:10</div>
<div class="cell" style="left:531.6px;width:211.7px;top:866.9px;color:#000;letter-spacing:-0.35px">15:25</div>
<div class="cell" style="left:752.8px;width:213.6px;top:866.9px;color:#000;letter-spacing:-0.35px">15:55</div>
<div class="cell" style="left:87.5px;width:211.6px;top:902.4px;color:#000;letter-spacing:-0.35px">15:00</div>
<div class="cell" style="left:308.6px;width:213.5px;top:902.4px;color:#000;letter-spacing:-0.35px">15:10</div>
<div class="cell" style="left:531.6px;width:211.7px;top:902.4px;color:#000;letter-spacing:-0.35px">15:25</div>
<div class="cell" style="left:752.8px;width:213.6px;top:902.4px;color:#000;letter-spacing:-0.35px">15:55</div>
<div class="cell" style="left:87.5px;width:211.6px;top:937.9px;color:#000;letter-spacing:-0.35px">15:20</div>
<div class="cell" style="left:308.6px;width:213.5px;top:937.9px;color:#000;letter-spacing:-0.35px">15:30</div>
<div class="cell" style="left:531.6px;width:211.7px;top:937.9px;color:#000;letter-spacing:-0.35px">15:45</div>
<div class="cell" style="left:752.8px;width:213.6px;top:937.9px;color:#000;letter-spacing:-0.35px">16:15</div>
<div class="cell" style="left:87.5px;width:211.6px;top:973.5px;color:#000;letter-spacing:-0.35px">15:20</div>
<div class="cell" style="left:308.6px;width:213.5px;top:973.5px;color:#000;letter-spacing:-0.35px">15:30</div>
<div class="cell" style="left:531.6px;width:211.7px;top:973.5px;color:#000;letter-spacing:-0.35px">15:45</div>
<div class="cell" style="left:752.8px;width:213.6px;top:973.5px;color:#000;letter-spacing:-0.35px">16:15</div>
<div class="cell" style="left:87.5px;width:211.6px;top:1009.0px;color:#000;letter-spacing:-0.35px">15:40</div>
<div class="cell" style="left:308.6px;width:213.5px;top:1009.0px;color:#000;letter-spacing:-0.35px">15:50</div>
<div class="cell" style="left:531.6px;width:211.7px;top:1009.0px;color:#000;letter-spacing:-0.35px">16:05</div>
<div class="cell" style="left:752.8px;width:213.6px;top:1009.0px;color:#000;letter-spacing:-0.35px">16:35</div>
<div class="cell" style="left:87.5px;width:211.6px;top:1044.5px;color:#000;letter-spacing:-0.35px">15:40</div>
<div class="cell" style="left:308.6px;width:213.5px;top:1044.5px;color:#000;letter-spacing:-0.35px">15:50</div>
<div class="cell" style="left:531.6px;width:211.7px;top:1044.5px;color:#000;letter-spacing:-0.35px">16:05</div>
<div class="cell" style="left:752.8px;width:213.6px;top:1044.5px;color:#000;letter-spacing:-0.35px">16:35</div>
<div class="a" style="left:1280px;top:226px;width:35px;height:852px;background:linear-gradient(to right,#f3f1ea,#fdfdfa 40%,#fefefb)"></div>
<div class="a" style="left:1282px;top:228px;width:33px;height:36px;border:2px solid #fff;border-radius:4px;background:linear-gradient(135deg,#dfe8fe 0,#c5d5fc 50%,#b5c9f8 100%);box-shadow:1px 2px 0 #a8b8d8"><svg style="position:absolute;left:3px;top:6px" width="24" height="20" viewBox="0 0 24 20"><path d="M3 14 L12 5 L21 14" stroke="#4d6185" stroke-width="4.5" fill="none"/></svg></div>
<div class="a" style="left:1282px;top:1041px;width:33px;height:36px;border:2px solid #fff;border-radius:4px;background:linear-gradient(135deg,#dfe8fe 0,#c5d5fc 50%,#b5c9f8 100%);box-shadow:1px 2px 0 #a8b8d8"><svg style="position:absolute;left:3px;top:8px" width="24" height="20" viewBox="0 0 24 20"><path d="M3 5 L12 14 L21 5" stroke="#4d6185" stroke-width="4.5" fill="none"/></svg></div>
<div class="a" style="left:1282px;top:709px;width:33px;height:37px;border:2px solid #fff;border-radius:4px;background:linear-gradient(135deg,#dfe8fe 0,#c5d5fc 50%,#b5c9f8 100%);box-shadow:1px 2px 0 #a8b8d8"><svg style="position:absolute;left:7px;top:7px" width="18" height="22" viewBox="0 0 18 22"><g stroke-width="1.8"><line x1="1.5" y1="2.6" x2="16.5" y2="2.6" stroke="#f0f6ff"/><line x1="1.5" y1="4.4" x2="16.5" y2="4.4" stroke="#8caaf0"/><line x1="1.5" y1="7.2" x2="16.5" y2="7.2" stroke="#f0f6ff"/><line x1="1.5" y1="9" x2="16.5" y2="9" stroke="#8caaf0"/><line x1="1.5" y1="11.8" x2="16.5" y2="11.8" stroke="#f0f6ff"/><line x1="1.5" y1="13.6" x2="16.5" y2="13.6" stroke="#8caaf0"/><line x1="1.5" y1="16.4" x2="16.5" y2="16.4" stroke="#f0f6ff"/><line x1="1.5" y1="18.2" x2="16.5" y2="18.2" stroke="#8caaf0"/></g></svg></div>
<div class="t" style="left:8px;top:1091px">Ready</div>
<div class="a" style="left:999px;top:1087px;width:280px;height:34px;border-top:2px solid #aca899;border-left:2px solid #aca899;border-right:2px solid #fff;border-bottom:2px solid #fff"></div>
<svg class="a" style="left:1290px;top:1092px" width="30" height="30" viewBox="0 0 30 30"><g stroke="#aca899" stroke-width="2.5"><line x1="28" y1="3" x2="3" y2="28"/><line x1="28" y1="12" x2="12" y2="28"/><line x1="28" y1="21" x2="21" y2="28"/></g><g stroke="#fff" stroke-width="1.5"><line x1="29" y1="6" x2="6" y2="29"/><line x1="29" y1="15" x2="15" y2="29"/><line x1="29" y1="24" x2="24" y2="29"/></g></svg>
<div class="a" style="left:0;top:1128px;width:1324px;height:17px;background:linear-gradient(to bottom,#2a5ccc 0,#3a80e0 1.5px,#3586e6 4px,#3584e6 9px,#2e6ed8 11.5px,#3a84e4 13px,#3c86e4 17px)"></div>
<div class="a" style="left:0;top:1139px;width:981px;height:6px;background:linear-gradient(to bottom,#2e6ed8 0,#3a84e4 2px,#3c86e4 6px)"></div>
<div class="a" style="left:0;top:1145px;width:1px;height:57px;background:#5a90e8"></div>
<div class="a" style="left:981px;top:1139px;width:31px;height:63px;background:#2a5ddc"></div>
<div class="a" style="left:1011px;top:1139px;width:313px;height:63px;background:linear-gradient(to bottom,#18b4f8 0,#12a2f0 6px,#0e98e8 50%,#0c8ee0 100%);border-left:2px solid #1a50a8"></div>
<svg class="a" style="left:0;top:1135px" width="1324" height="74" viewBox="0 1135 1324 74"><defs><radialGradient id="cg" cx="0.3" cy="0.25" r="0.9"><stop offset="0" stop-color="#a8dcff"/><stop offset="0.45" stop-color="#3a9af4"/><stop offset="1" stop-color="#0a5ee0"/></radialGradient><linearGradient id="pg" x1="0" y1="0" x2="1" y2="1"><stop offset="0" stop-color="#f0f4ff"/><stop offset="1" stop-color="#a8c0e8"/></linearGradient></defs><circle cx="1010.7" cy="1172.4" r="19" fill="url(#cg)" stroke="#1c4fa8" stroke-width="1.6"/><circle cx="1010.7" cy="1172.4" r="20.6" fill="none" stroke="#7ab0f0" stroke-width="1" opacity="0.7"/><path d="M1014.5 1163 L1005.5 1172.4 L1014.5 1181.8" stroke="#fff" stroke-width="5" fill="none" stroke-linejoin="miter"/><circle cx="1048" cy="1159.5" r="5" fill="url(#pg)"/><path d="M1038.5 1187 L1038.5 1174 Q1039 1166 1048 1166 Q1057 1166 1057.5 1174 L1057.5 1187 Z" fill="url(#pg)"/><rect x="1054" y="1172.5" width="15" height="15" rx="3" fill="#3ce010" stroke="#0c6a00" stroke-width="2"/><rect x="1057.5" y="1180" width="8" height="3" fill="#1c8a08"/><ellipse cx="1093" cy="1169" rx="14" ry="13" fill="url(#pg)"/><path d="M1098 1178 L1106 1186 L1101 1176 Z" fill="#d8e4f8"/><rect x="1076" y="1167" width="18" height="18" rx="3.5" fill="#a8e870" stroke="#58a828" stroke-width="2"/><line x1="1078" y1="1176" x2="1092" y2="1176" stroke="#88c850" stroke-width="1.2"/><path d="M1125 1153.5 L1140 1153.5 L1150.3 1164 L1150.3 1179 L1140 1189 L1125 1189 L1114.5 1179 L1114.5 1164 Z" fill="#0000f0" stroke="#000850" stroke-width="1.2"/><path d="M1115 1174 L1121 1174 Q1123 1164 1125.5 1165 Q1128 1166 1129 1175 Q1130 1183 1132 1182 Q1134 1181 1135 1170 Q1136 1162 1138 1164 Q1140 1166 1141 1173 Q1142 1177 1144 1174 L1150 1174" stroke="#f0e070" stroke-width="2" fill="none"/><rect x="1166" y="1154.5" width="17" height="15" fill="#4a4a7a" stroke="#8888b8" stroke-width="1.5"/><rect x="1170" y="1170" width="10" height="5" fill="#7a7ab0"/><ellipse cx="1176" cy="1178" rx="7" ry="3" fill="#c8c8e8"/><rect x="1155" y="1162" width="17" height="15" fill="#4a4a7a" stroke="#8888b8" stroke-width="1.5"/><rect x="1159" y="1177.5" width="10" height="4" fill="#7a7ab0"/><ellipse cx="1163" cy="1184" rx="8" ry="3.5" fill="#e0e0f4"/></svg>
<div class="t" style="left:1205px;top:1158px;color:#fff;letter-spacing:-0.2px">12:12 PM</div>
<svg class="a" style="left:0;top:0" width="1324" height="1209" viewBox="0 0 1324 1209"><line x1="316.2" y1="317.5" x2="1193" y2="1135" stroke="#000" stroke-width="3.4" stroke-linecap="round"/><path d="M1214 1154 L1180 1146 L1203 1123 Z" fill="#000"/></svg>
</body></html>
